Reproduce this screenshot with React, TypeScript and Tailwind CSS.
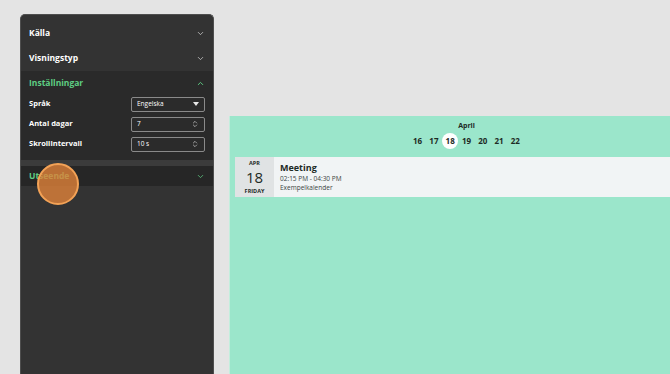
import { ChevronDown, ChevronUp, ChevronsUpDown } from 'lucide-react';

const font = { fontFamily: '"Open Sans", "Noto Sans", sans-serif' };

function Header({ label, open = false, active = false }: { label: string; open?: boolean; active?: boolean }) {
  return (
    <div className="flex h-[25px] items-center justify-between px-[8px]">
      <span className={`text-[8.5px] font-bold ${active ? 'text-[#5fce84]' : 'text-white'}`}>{label}</span>
      {open ? (
        <ChevronUp size={9} strokeWidth={2.5} className={active ? 'text-[#5fce84]' : 'text-[#cfcfcf]'} />
      ) : (
        <ChevronDown size={9} strokeWidth={2} className={active ? 'text-[#5fce84]' : 'text-[#cfcfcf]'} />
      )}
    </div>
  );
}

function Field({ label, value, select = false }: { label: string; value: string; select?: boolean }) {
  return (
    <div className="flex h-[20px] items-center justify-between pl-[8px] pr-[8px]">
      <span className="text-[7.5px] font-bold text-white">{label}</span>
      <div className="flex h-[15px] w-[74px] items-center justify-between rounded-[2px] border border-[#8a8a8a] bg-[#2b2b2b] px-[5px]">
        <span className="text-[6.5px] text-white">{value}</span>
        {select ? (
          <svg width="6" height="4" viewBox="0 0 6 4">
            <path d="M0 0 H6 L3 4 Z" fill="#e8e8e8" />
          </svg>
        ) : (
          <ChevronsUpDown size={8} strokeWidth={2} className="text-[#d8d8d8]" />
        )}
      </div>
    </div>
  );
}

export default function App() {
  const days = [16, 17, 18, 19, 20, 21, 22];
  return (
    <div className="flex h-[374px] w-[670px] overflow-hidden bg-[#e4e4e4]" style={font}>
      {/* Sidebar */}
      <div className="relative ml-[20px] mt-[14px] w-[194px] shrink-0 rounded-t-[5px] border border-b-0 border-[#4e4e4e] bg-[#333333] pt-[6px]">
        <Header label="Källa" />
        <Header label="Visningstyp" />
        <div className="bg-[#2a2a2a] pb-[6px]">
          <div className="-mb-[2px]">
            <Header label="Inställningar" open active />
          </div>
          <Field label="Språk" value="Engelska" select />
          <Field label="Antal dagar" value="7" />
          <Field label="Skrollintervall" value="10 s" />
        </div>
        <div className="h-[6px] bg-[#3b3b3b]" />
        <div className="flex h-[20px] items-center justify-between bg-[#262626] px-[8px]">
          <span className="text-[8.5px] font-bold text-[#5fce84]">Utseende</span>
          <ChevronDown size={9} strokeWidth={2} className="text-[#5fce84]" />
        </div>
        {/* click highlight */}
        <div className="absolute left-[16px] top-[148px] h-[42px] w-[42px] rounded-full border-2 border-[#f3a256] bg-[#e0823a]/80" />
      </div>

      {/* Calendar preview */}
      <div className="ml-[15px] mt-[116px] w-[474px] shrink-0 border-l border-[#c3eedd] bg-[#9be6cb] pt-[5px]">
        <div className="text-center text-[7px] font-bold leading-[10px] text-[#1d2a25]">April</div>
        <div className="mt-[2px] flex justify-center">
          {days.map((d) => (
            <div
              key={d}
              className={`flex h-[16px] w-[16.3px] items-center justify-center rounded-full text-[8px] font-bold text-[#1d2a25] ${d === 18 ? 'bg-white' : ''}`}
            >
              {d}
            </div>
          ))}
        </div>
        <div className="ml-[5px] mt-[8px] flex h-[40px] bg-[#f1f4f5]">
          <div className="flex w-[39px] flex-col items-center justify-center bg-[#e0e3e4] text-[#1d2a25]">
            <div className="text-[5.5px] font-bold leading-[8px]">APR</div>
            <div className="text-[15px] leading-[20px]">18</div>
            <div className="text-[5.5px] font-bold leading-[8px]">FRIDAY</div>
          </div>
          <div className="flex flex-col justify-center pl-[6px] text-[#1d2a25]">
            <div className="text-[9px] font-bold leading-[12.5px]">Meeting</div>
            <div className="text-[6.5px] leading-[9px] text-[#3b4542]">02:15 PM - 04:30 PM</div>
            <div className="text-[6.5px] leading-[9px] text-[#3b4542]">Exempelkalender</div>
          </div>
        </div>
      </div>
    </div>
  );
}
